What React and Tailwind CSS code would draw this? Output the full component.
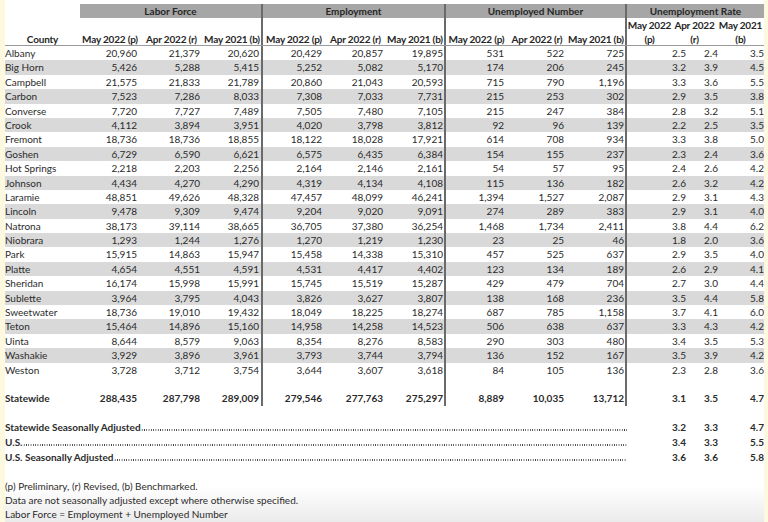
const rows = [
  ["Albany", "20,960", "21,379", "20,620", "20,429", "20,857", "19,895", "531", "522", "725", "2.5", "2.4", "3.5"],
  ["Big Horn", "5,426", "5,288", "5,415", "5,252", "5,082", "5,170", "174", "206", "245", "3.2", "3.9", "4.5"],
  ["Campbell", "21,575", "21,833", "21,789", "20,860", "21,043", "20,593", "715", "790", "1,196", "3.3", "3.6", "5.5"],
  ["Carbon", "7,523", "7,286", "8,033", "7,308", "7,033", "7,731", "215", "253", "302", "2.9", "3.5", "3.8"],
  ["Converse", "7,720", "7,727", "7,489", "7,505", "7,480", "7,105", "215", "247", "384", "2.8", "3.2", "5.1"],
  ["Crook", "4,112", "3,894", "3,951", "4,020", "3,798", "3,812", "92", "96", "139", "2.2", "2.5", "3.5"],
  ["Fremont", "18,736", "18,736", "18,855", "18,122", "18,028", "17,921", "614", "708", "934", "3.3", "3.8", "5.0"],
  ["Goshen", "6,729", "6,590", "6,621", "6,575", "6,435", "6,384", "154", "155", "237", "2.3", "2.4", "3.6"],
  ["Hot Springs", "2,218", "2,203", "2,256", "2,164", "2,146", "2,161", "54", "57", "95", "2.4", "2.6", "4.2"],
  ["Johnson", "4,434", "4,270", "4,290", "4,319", "4,134", "4,108", "115", "136", "182", "2.6", "3.2", "4.2"],
  ["Laramie", "48,851", "49,626", "48,328", "47,457", "48,099", "46,241", "1,394", "1,527", "2,087", "2.9", "3.1", "4.3"],
  ["Lincoln", "9,478", "9,309", "9,474", "9,204", "9,020", "9,091", "274", "289", "383", "2.9", "3.1", "4.0"],
  ["Natrona", "38,173", "39,114", "38,665", "36,705", "37,380", "36,254", "1,468", "1,734", "2,411", "3.8", "4.4", "6.2"],
  ["Niobrara", "1,293", "1,244", "1,276", "1,270", "1,219", "1,230", "23", "25", "46", "1.8", "2.0", "3.6"],
  ["Park", "15,915", "14,863", "15,947", "15,458", "14,338", "15,310", "457", "525", "637", "2.9", "3.5", "4.0"],
  ["Platte", "4,654", "4,551", "4,591", "4,531", "4,417", "4,402", "123", "134", "189", "2.6", "2.9", "4.1"],
  ["Sheridan", "16,174", "15,998", "15,991", "15,745", "15,519", "15,287", "429", "479", "704", "2.7", "3.0", "4.4"],
  ["Sublette", "3,964", "3,795", "4,043", "3,826", "3,627", "3,807", "138", "168", "236", "3.5", "4.4", "5.8"],
  ["Sweetwater", "18,736", "19,010", "19,432", "18,049", "18,225", "18,274", "687", "785", "1,158", "3.7", "4.1", "6.0"],
  ["Teton", "15,464", "14,896", "15,160", "14,958", "14,258", "14,523", "506", "638", "637", "3.3", "4.3", "4.2"],
  ["Uinta", "8,644", "8,579", "9,063", "8,354", "8,276", "8,583", "290", "303", "480", "3.4", "3.5", "5.3"],
  ["Washakie", "3,929", "3,896", "3,961", "3,793", "3,744", "3,794", "136", "152", "167", "3.5", "3.9", "4.2"],
  ["Weston", "3,728", "3,712", "3,754", "3,644", "3,607", "3,618", "84", "105", "136", "2.3", "2.8", "3.6"],
];

const statewide = ["Statewide", "288,435", "287,798", "289,009", "279,546", "277,763", "275,297", "8,889", "10,035", "13,712", "3.1", "3.5", "4.7"];

// widths of the data cells, county first; the group ends carry a dark rule
const cols = [
  { w: "w-[75px]", cls: "text-left" },
  { w: "w-[60px]", cls: "text-right pr-[3px]" },
  { w: "w-[63px]", cls: "text-right pr-[3px]" },
  { w: "w-[60px]", cls: "text-right pr-[2px] border-r-2 border-[#6a6a6a]" },
  { w: "w-[62px]", cls: "text-right pr-[3px]" },
  { w: "w-[61px]", cls: "text-right pr-[3px]" },
  { w: "w-[60px]", cls: "text-right pr-[1px] border-r-2 border-[#6a6a6a]" },
  { w: "w-[61px]", cls: "text-right pr-[3px]" },
  { w: "w-[60px]", cls: "text-right pr-[3px]" },
  { w: "w-[60px]", cls: "text-right pr-[1px] border-r-2 border-[#6a6a6a]" },
  { w: "w-[62px]", cls: "text-right pr-[3px]" },
  { w: "w-[31px]", cls: "text-right pr-[2px]" },
  { w: "w-[44px]", cls: "text-right pr-0" },
];

function DataRow({ cells, shade, bold, blank }) {
  return (
    <div className={`flex h-[14.4px] items-center ${shade ? "bg-[#d9d9d9]" : ""} ${bold ? "font-bold" : ""}`}>
      {cols.map((c, i) => (
        <div key={i} className={`${c.w} ${c.cls} h-full shrink-0 leading-[14.4px] whitespace-nowrap`}>
          {blank ? "" : cells[i]}
        </div>
      ))}
    </div>
  );
}

function Leader({ label, values }) {
  return (
    <div className="flex h-[15px] items-center font-bold leading-[15px]">
      <div className="flex h-full w-[622px] shrink-0 items-center">
        <span className="shrink-0 whitespace-nowrap">{label}</span>
        <div className="mt-[5px] h-[2px] min-w-0 flex-1 bg-[radial-gradient(circle,#3a3a3a_40%,transparent_60%)] bg-[length:2.3px_2px] bg-repeat-x" />
      </div>
      <div className="w-[62px] shrink-0 pr-[3px] text-right">{values[0]}</div>
      <div className="w-[31px] shrink-0 pr-[2px] text-right">{values[1]}</div>
      <div className="w-[44px] shrink-0 text-right">{values[2]}</div>
    </div>
  );
}

export default function App() {
  const rule = "border-r-2 border-[#6a6a6a]";
  const one = "flex shrink-0 items-end justify-center leading-[11px]";
  return (
    <div
      className="flex h-[522px] w-[768px] overflow-hidden bg-[linear-gradient(to_bottom,#ffffff_93%,#ebebeb)] text-[10px] text-[#2b2b2b]"
      style={{ fontFamily: "Lato, 'Liberation Sans', sans-serif" }}
    >
      <div className="w-[5px] shrink-0 bg-[#fcf9e0]" />
      <div className="w-[759px] shrink-0">
        {/* group header bar */}
        <div className="mt-[4px] flex h-[14px] font-bold text-[#262626]">
          <div className="w-[75px] shrink-0" />
          <div className={`flex w-[183px] shrink-0 items-center justify-center bg-[#a6a6a6] ${rule}`}>Labor Force</div>
          <div className={`flex w-[183px] shrink-0 items-center justify-center bg-[#a6a6a6] ${rule}`}>Employment</div>
          <div className={`flex w-[181px] shrink-0 items-center justify-center bg-[#a6a6a6] ${rule}`}>Unemployed Number</div>
          <div className="flex w-[137px] shrink-0 items-center justify-center bg-[#a6a6a6]">Unemployment Rate</div>
        </div>

        {/* column headers */}
        <div className="flex h-[28px] border-b border-[#9a9a9a] font-bold tracking-[-0.2px] text-[#262626] whitespace-nowrap">
          <div className={`${one} w-[75px]`}>County</div>
          <div className={`${one} w-[60px]`}>May 2022 (p)</div>
          <div className={`${one} w-[63px]`}>Apr 2022 (r)</div>
          <div className={`${one} w-[60px] ${rule}`}>May 2021 (b)</div>
          <div className={`${one} w-[62px]`}>May 2022 (p)</div>
          <div className={`${one} w-[61px]`}>Apr 2022 (r)</div>
          <div className={`${one} w-[60px] ${rule}`}>May 2021 (b)</div>
          <div className={`${one} w-[61px]`}>May 2022 (p)</div>
          <div className={`${one} w-[60px]`}>Apr 2022 (r)</div>
          <div className={`${one} w-[60px] ${rule}`}>May 2021 (b)</div>
          <div className="flex w-[45px] shrink-0 flex-col items-center justify-end">
            <span className="leading-[17px]">May 2022</span>
            <span className="leading-[11px]">(p)</span>
          </div>
          <div className="flex w-[45px] shrink-0 flex-col items-center justify-end">
            <span className="leading-[17px]">Apr 2022</span>
            <span className="leading-[11px]">(r)</span>
          </div>
          <div className="flex w-[47px] shrink-0 flex-col items-center justify-end">
            <span className="leading-[17px]">May 2021</span>
            <span className="leading-[11px]">(b)</span>
          </div>
        </div>

        {rows.map((r, i) => (
          <DataRow key={r[0]} cells={r} shade={i % 2 === 1} />
        ))}
        <DataRow blank />
        <DataRow cells={statewide} bold />

        <div className="mt-[14px]">
          <Leader label="Statewide Seasonally Adjusted" values={["3.2", "3.3", "4.7"]} />
          <Leader label="U.S." values={["3.4", "3.3", "5.5"]} />
          <Leader label="U.S. Seasonally Adjusted" values={["3.6", "3.6", "5.8"]} />
        </div>

        <div className="mt-[14px] leading-[14px]">
          <p>(p) Preliminary, (r) Revised, (b) Benchmarked.</p>
          <p>Data are not seasonally adjusted except where otherwise specified.</p>
          <p>Labor Force = Employment + Unemployed Number</p>
        </div>
      </div>
      <div className="w-[4px] shrink-0 bg-[#fcf9e0]" />
    </div>
  );
}
